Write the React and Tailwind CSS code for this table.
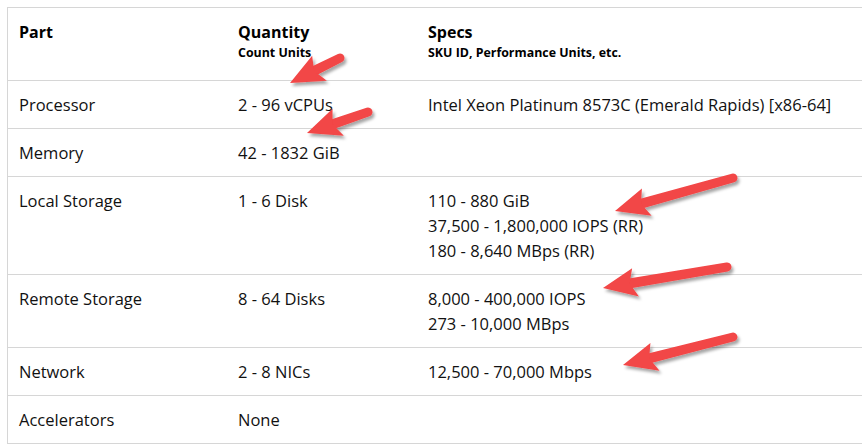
import React from 'react'

const rows = [
  { part: 'Processor', qty: '2 - 96 vCPUs', specs: ['Intel Xeon Platinum 8573C (Emerald Rapids) [x86-64]'] },
  { part: 'Memory', qty: '42 - 1832 GiB', specs: [] },
  { part: 'Local Storage', qty: '1 - 6 Disk', specs: ['110 - 880 GiB', '37,500 - 1,800,000 IOPS (RR)', '180 - 8,640 MBps (RR)'] },
  { part: 'Remote Storage', qty: '8 - 64 Disks', specs: ['8,000 - 400,000 IOPS', '273 - 10,000 MBps'] },
  { part: 'Network', qty: '2 - 8 NICs', specs: ['12,500 - 70,000 Mbps'] },
  { part: 'Accelerators', qty: 'None', specs: [] },
]

// tail -> tip
const arrows = [
  [340, 58, 290, 83],
  [368, 112, 307, 133],
  [733, 178, 615, 211],
  [727, 267, 603, 288],
  [733, 337, 623, 365],
]

function Arrow({ x1, y1, x2, y2 }) {
  const dx = x2 - x1
  const dy = y2 - y1
  const len = Math.sqrt(dx * dx + dy * dy)
  const ang = (Math.atan2(dy, dx) * 180) / Math.PI
  return (
    <g transform={`translate(${x1} ${y1}) rotate(${ang})`}>
      <path d={`M0 -4.5 L${len - 26} -5 L${len - 24} 5 L0 4.5 A4.5 4.5 0 0 1 0 -4.5 Z`} fill="#f24646" />
      <path d={`M${len} 0 L${len - 34} -14.5 L${len - 27} 0 L${len - 32} 14.5 Z`} fill="#f24646" />
    </g>
  )
}

export default function App() {
  return (
    <div className="relative w-[862px] h-[444px] overflow-hidden bg-white" style={{ fontFamily: '"Open Sans", sans-serif' }}>
      <div className="ml-[7px] mt-[7px] w-[880px] border-l border-t border-[#d6d6d6] text-[#111]">
        <div className="grid grid-cols-[219px_190px_1fr] border-b border-[#d6d6d6] h-[73px]">
          <div className="pl-[11px] pt-[12px] text-[16px] font-bold leading-[24px] text-black">Part</div>
          <div className="pl-[11px] pt-[12px] text-black">
            <div className="text-[16px] font-bold leading-[24px]">Quantity</div>
            <div className="text-[12.4px] font-bold leading-[17px]">Count Units</div>
          </div>
          <div className="pl-[11px] pt-[12px] text-black">
            <div className="text-[16px] font-bold leading-[24px]">Specs</div>
            <div className="text-[12.4px] font-bold leading-[17px]">SKU ID, Performance Units, etc.</div>
          </div>
        </div>
        {rows.map(r => (
          <div key={r.part} className="grid grid-cols-[219px_190px_1fr] border-b border-[#d6d6d6] py-[11px] text-[16.5px] leading-[25px]">
            <div className="pl-[11px]">{r.part}</div>
            <div className="pl-[11px]">{r.qty}</div>
            <div className="pl-[11px]">
              {r.specs.map(s => <div key={s}>{s}</div>)}
            </div>
          </div>
        ))}
      </div>
      <svg className="absolute left-0 top-0 pointer-events-none" width="862" height="444">
        <defs>
          <filter id="sh" x="-20%" y="-50%" width="140%" height="200%">
            <feDropShadow dx="2" dy="3" stdDeviation="1.6" floodColor="#000" floodOpacity="0.35" />
          </filter>
        </defs>
        <g filter="url(#sh)">
          {arrows.map((a, i) => <Arrow key={i} x1={a[0]} y1={a[1]} x2={a[2]} y2={a[3]} />)}
        </g>
      </svg>
    </div>
  )
}
